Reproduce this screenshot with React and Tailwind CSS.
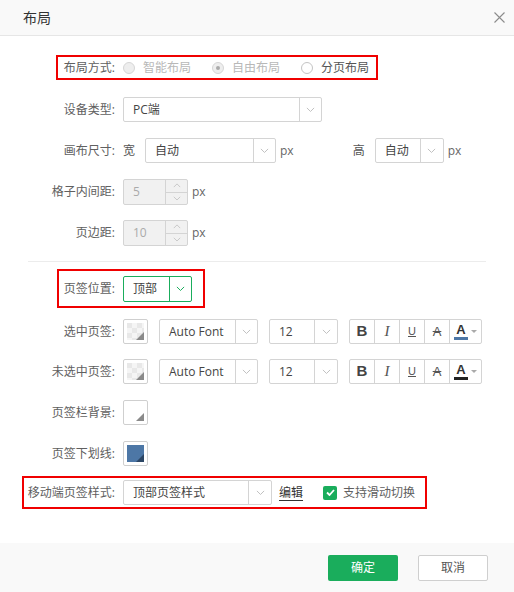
import React, { useState } from "react";

const FONT = "font-['Open_Sans','Noto_Sans_CJK_SC',sans-serif]";

const Chevron = ({ color = "#b5b5b5", size = 9 }) => (
  <svg width={size} height={size * 0.6} viewBox="0 0 10 6" fill="none">
    <polyline points="1,1 5,5 9,1" stroke={color} strokeWidth="1.1" />
  </svg>
);

const Select = ({ value, width, arrow = 22, green = false, height = 25 }) => (
  <div
    className={`flex items-stretch bg-white rounded-[2px] border box-border ${
      green ? "border-[#1aad5c]" : "border-[#d4d4d4]"
    }`}
    style={{ width, height }}
  >
    <div className="flex-1 flex items-center pl-[9px] text-[12px] text-[#444] whitespace-nowrap overflow-hidden">
      {value}
    </div>
    <div
      className={`flex items-center justify-center border-l ${
        green ? "border-[#1aad5c]" : "border-[#d4d4d4]"
      }`}
      style={{ width: arrow }}
    >
      <Chevron color={green ? "#1aad5c" : "#c0c0c0"} />
    </div>
  </div>
);

const Spinner = ({ value }) => (
  <div className="flex items-stretch w-[65px] h-[26px] border border-[#d4d4d4] rounded-[2px] bg-[#f1f1f1] box-border">
    <div className="flex-1 flex items-center pl-[9px] text-[12px] text-[#aaa]">
      {value}
    </div>
    <div className="w-[22px] flex flex-col border-l border-[#d4d4d4]">
      <div className="flex-1 flex items-center justify-center border-b border-[#d4d4d4]">
        <svg width="8" height="5" viewBox="0 0 10 6" fill="none">
          <polyline points="1,5 5,1 9,5" stroke="#c4c4c4" strokeWidth="1.1" />
        </svg>
      </div>
      <div className="flex-1 flex items-center justify-center">
        <Chevron color="#c4c4c4" size={8} />
      </div>
    </div>
  </div>
);

const Radio = ({ label, checked, disabled }) => (
  <label className="flex items-center gap-2">
    <span
      className={`w-[12px] h-[12px] rounded-full border flex items-center justify-center ${
        disabled ? "bg-[#eeeeee] border-[#d6d6d6]" : "bg-white border-[#c4c4c4]"
      }`}
    >
      {checked && <span className="w-[4px] h-[4px] rounded-full bg-[#aaa]" />}
    </span>
    <span className={`text-[12px] ${disabled ? "text-[#b8b8b8]" : "text-[#555]"}`}>
      {label}
    </span>
  </label>
);

const Swatch = ({ kind }) => (
  <div className="w-[25px] h-[25px] border border-[#cfcfcf] rounded-[2px] bg-white p-[3px] box-border">
    <div className="relative w-full h-full overflow-hidden">
      {kind === "checker" && (
        <svg width="17" height="17" className="block">
          <defs>
            <pattern id="chk" width="10" height="10" patternUnits="userSpaceOnUse">
              <rect width="10" height="10" fill="#f5f5f5" />
              <rect width="5" height="5" fill="#e8e8e8" />
              <rect x="5" y="5" width="5" height="5" fill="#e8e8e8" />
            </pattern>
          </defs>
          <rect width="17" height="17" fill="url(#chk)" />
        </svg>
      )}
      {kind === "blue" && <div className="w-full h-full bg-[#4d77a6]" />}
      <svg width="8" height="8" className="absolute right-0 bottom-0">
        <polygon
          points="8,0 8,8 0,8"
          fill={kind === "blue" ? "#2c4665" : "#8a8a8a"}
        />
      </svg>
    </div>
  </div>
);

const StyleButtons = ({ color }) => (
  <div className="flex h-[25px] border border-[#d4d4d4] rounded-[2px] bg-white box-border">
    <div className="w-[25px] flex items-center justify-center border-r border-[#d4d4d4] text-[15px] font-bold text-[#444] font-['Liberation_Sans',sans-serif]">
      B
    </div>
    <div className="w-[25px] flex items-center justify-center border-r border-[#d4d4d4] text-[15px] italic text-[#555] font-['Liberation_Serif',serif]">
      I
    </div>
    <div className="w-[25px] flex items-center justify-center border-r border-[#d4d4d4] text-[11px] underline text-[#555] font-['Liberation_Sans',sans-serif]">
      U
    </div>
    <div className="w-[25px] flex items-center justify-center border-r border-[#d4d4d4] text-[13px] line-through text-[#555] font-['Liberation_Sans',sans-serif]">
      A
    </div>
    <div className="flex-1 flex items-center justify-center gap-[3px]">
      <div className="flex flex-col items-center">
        <span className="text-[13px] leading-[13px] font-bold text-[#333] font-['Liberation_Sans',sans-serif]">
          A
        </span>
        <span className="w-[14px] h-[3px] mt-[1px]" style={{ background: color }} />
      </div>
      <svg width="6" height="4" viewBox="0 0 6 4">
        <polygon points="0,0 6,0 3,3" fill="#aaa" />
      </svg>
    </div>
  </div>
);

const Row = ({ label, children, mt }) => (
  <div className="flex items-center" style={{ marginTop: mt }}>
    <div className="w-[115px] text-right text-[12px] text-[#606060] whitespace-nowrap">
      {label}
    </div>
    <div className="ml-2 flex items-center">{children}</div>
  </div>
);

const App = () => {
  const [swipe, setSwipe] = useState(true);

  return (
    <div className={`w-[514px] h-[592px] bg-white flex flex-col ${FONT}`}>
      <div className="h-[36px] bg-[#f9f9f9] border-b border-[#e6e6e6] flex items-center justify-between pl-[23px] pr-[9px] shrink-0">
        <span className="text-[14px] text-[#333]">布局</span>
        <svg width="11" height="11" viewBox="0 0 11 11">
          <path d="M0.5 0.5 L10.5 10.5 M10.5 0.5 L0.5 10.5" stroke="#8c8c8c" strokeWidth="1.1" />
        </svg>
      </div>

      <div className="flex-1 flex flex-col">
        {/* layout mode */}
        <div className="mt-[19px] ml-[56px] w-[322px] h-[25px] border-2 border-[#f00000] flex items-center pl-[5px] box-border">
          <div className="w-[52px] text-right text-[12px] text-[#606060] whitespace-nowrap">布局方式:</div>
          <div className="ml-2 flex items-center gap-[21px]">
            <Radio label="智能布局" disabled />
            <Radio label="自由布局" disabled checked />
            <Radio label="分页布局" />
          </div>
        </div>

        <Row label="设备类型:" mt={17}>
          <Select value="PC端" width={199} />
        </Row>

        <Row label="画布尺寸:" mt={16}>
          <span className="text-[12px] text-[#555]">宽</span>
          <div className="ml-[10px]">
            <Select value="自动" width={131} />
          </div>
          <span className="ml-[4px] text-[12px] text-[#666]">px</span>
          <span className="ml-[59px] text-[12px] text-[#555]">高</span>
          <div className="ml-[10px]">
            <Select value="自动" width={69} arrow={23} />
          </div>
          <span className="ml-[4px] text-[12px] text-[#666]">px</span>
        </Row>

        <Row label="格子内间距:" mt={16}>
          <Spinner value="5" />
          <span className="ml-[4px] text-[12px] text-[#666]">px</span>
        </Row>

        <Row label="页边距:" mt={15}>
          <Spinner value="10" />
          <span className="ml-[4px] text-[12px] text-[#666]">px</span>
        </Row>

        <div className="mt-[15px] mx-[28px] h-px bg-[#ececec]" />

        {/* tab position */}
        <div className="mt-[7px] ml-[57px] w-[148px] h-[39px] border-2 border-[#f00000] flex items-center pl-[4px] box-border">
          <div className="w-[52px] text-right text-[12px] text-[#606060] whitespace-nowrap">页签位置:</div>
          <div className="ml-2">
            <Select value="顶部" width={69} arrow={22} green height={26} />
          </div>
        </div>

        <Row label="选中页签:" mt={11}>
          <Swatch kind="checker" />
          <div className="ml-[11px]">
            <Select value="Auto Font" width={99} />
          </div>
          <div className="ml-[11px]">
            <Select value="12" width={69} arrow={23} />
          </div>
          <div className="ml-[11px] w-[133px]">
            <StyleButtons color="#4d77a6" />
          </div>
        </Row>

        <Row label="未选中页签:" mt={15}>
          <Swatch kind="checker" />
          <div className="ml-[11px]">
            <Select value="Auto Font" width={99} />
          </div>
          <div className="ml-[11px]">
            <Select value="12" width={69} arrow={23} />
          </div>
          <div className="ml-[11px] w-[133px]">
            <StyleButtons color="#222" />
          </div>
        </Row>

        <Row label="页签栏背景:" mt={16}>
          <Swatch kind="white" />
        </Row>

        <Row label="页签下划线:" mt={16}>
          <Swatch kind="blue" />
        </Row>

        {/* mobile tab style */}
        <div className="mt-[10px] ml-[22px] w-[405px] h-[33px] border-2 border-[#f00000] flex items-center pl-[3px] box-border">
          <div className="w-[88px] text-right text-[12px] text-[#606060] whitespace-nowrap">移动端页签样式:</div>
          <div className="ml-2">
            <Select value="顶部页签样式" width={149} arrow={23} />
          </div>
          <span className="ml-[7px] text-[12px] text-[#333] underline underline-offset-[3px]">编辑</span>
          <button
            type="button"
            onClick={() => setSwipe((v) => !v)}
            className="ml-[20px] flex items-center gap-[6px]"
          >
            <span
              className={`w-[14px] h-[14px] rounded-[2px] flex items-center justify-center ${
                swipe ? "bg-[#1aad5c]" : "bg-white border border-[#ccc]"
              }`}
            >
              {swipe && (
                <svg width="9" height="7" viewBox="0 0 9 7" fill="none">
                  <polyline points="1,3.5 3.5,6 8,1" stroke="#fff" strokeWidth="1.8" />
                </svg>
              )}
            </span>
            <span className="text-[12px] text-[#606060]">支持滑动切换</span>
          </button>
        </div>
      </div>

      <div className="h-[49px] bg-[#f9f9f9] flex items-start justify-end gap-[20px] pt-[12px] pr-[26px] shrink-0">
        <button
          type="button"
          className="w-[70px] h-[26px] rounded-[2px] bg-[#1aad5c] text-white text-[12px]"
        >
          确定
        </button>
        <button
          type="button"
          className="w-[70px] h-[26px] rounded-[2px] bg-white border border-[#cfcfcf] text-[#555] text-[12px]"
        >
          取消
        </button>
      </div>
    </div>
  );
};

export default App;
